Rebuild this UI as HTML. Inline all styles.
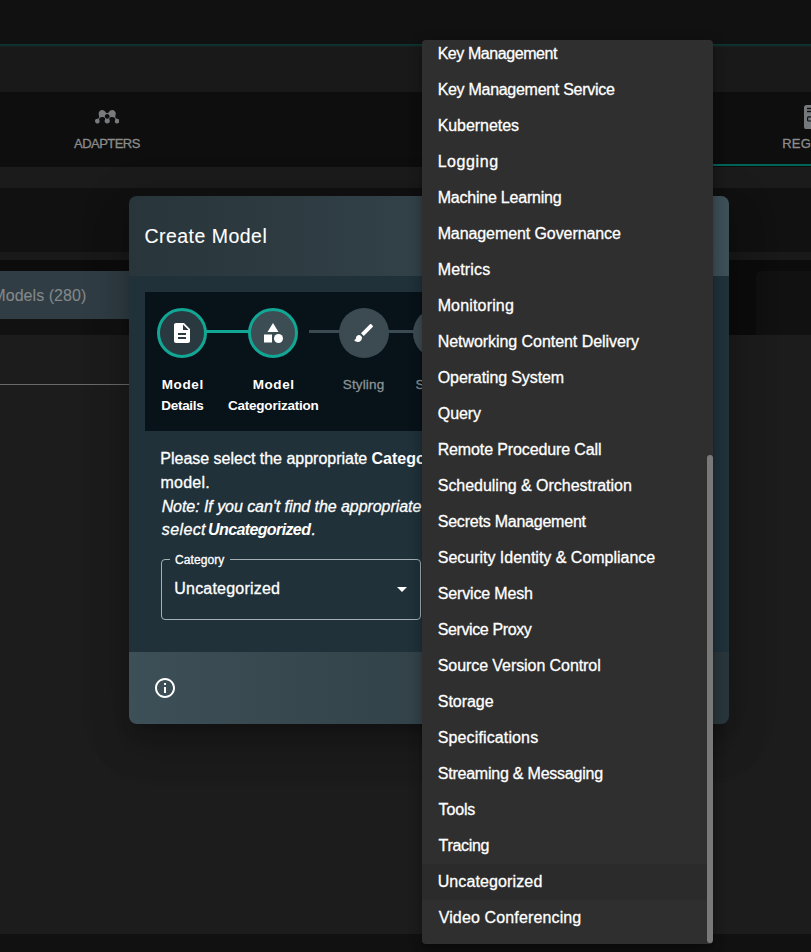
<!DOCTYPE html>
<html lang="en">
<head>
<meta charset="utf-8">
<title>Create Model</title>
<style>
*{box-sizing:border-box;margin:0;padding:0}
html,body{width:811px;height:952px;overflow:hidden;background:#1c1c1c}
body{position:relative;font-family:"Liberation Sans",sans-serif;color:#fff}
.abs{position:absolute}
.t{position:absolute;white-space:nowrap;line-height:1;-webkit-text-stroke:0.3px currentColor}
#top{left:0;top:0;width:811px;height:44px;background:#111111}
#topline{left:0;top:44px;width:811px;height:3px;background:linear-gradient(#0d3833 0%,#0f332f 34%,#142726 67%,#191919 100%)}
#band1{left:0;top:47px;width:811px;height:45px;background:#191919}
#tabs{left:0;top:92px;width:811px;height:75px;background:#0e0e0e}
#tabind{left:700px;top:164px;width:111px;height:2px;background:#006459}
#band2{left:0;top:167px;width:811px;height:21px;background:#1b1b1b}
#area{left:0;top:188px;width:811px;height:147px;background:#111}
#band3{left:0;top:252px;width:811px;height:8px;background:#191919}
#area2{left:0;top:260px;width:811px;height:75px;background:#0c0c0c}
#area3{left:0;top:319px;width:140px;height:16px;background:#111}
#modelsbtn{left:0;top:271px;width:200px;height:48px;background:#303d44}
#rbox{left:756px;top:271px;width:70px;height:64px;background:#111;border-radius:6px 0 0 0}
#hline{left:0;top:384px;width:129px;height:1px;background:#6a6a6a}
#bottom{left:0;top:934px;width:811px;height:18px;background:#111}
#modal{left:129px;top:196px;width:600px;height:528px;border-radius:8px;box-shadow:0 11px 15px -7px rgba(0,0,0,.2),0 24px 38px 3px rgba(0,0,0,.14),0 9px 46px 8px rgba(0,0,0,.12)}
#mclip{left:0;top:0;width:600px;height:528px;border-radius:8px;overflow:hidden}
#mhead{left:0;top:0;width:600px;height:80px;background:linear-gradient(90deg,#28353a 0%,#3d4f57 100%)}
#mbody{left:0;top:80px;width:600px;height:376px;background:#20313a}
#mfoot{left:0;top:456px;width:600px;height:72px;background:linear-gradient(90deg,#3d4f57 0%,#28353a 100%)}
#stepper{left:16px;top:96px;width:568px;height:139px;background:#071318}
.circ{position:absolute;width:50px;height:50px;border-radius:50%;top:16px}
.circ svg{position:absolute;left:13px;top:13px;width:24px;height:24px;fill:#fff}
.done{background:#2a393f;border:3px solid #12a695}
.done svg,.act svg{left:10px;top:10px}
.act{background:#3d4d54;border:3px solid #12a695}
.todo{background:#3c4b52}
.conn{position:absolute;height:3px;top:38px}
#select{left:32px;top:363px;width:260px;height:61px;border:1px solid #a4b0b6;border-radius:4px}
#notch{left:41px;top:361px;width:60px;height:4px;background:#20313a}
#menu{left:422px;top:40px;width:291px;height:904px;background:#2f2f2f;border-radius:4px;overflow:hidden}
#menushadow{left:422px;top:40px;width:291px;height:904px;border-radius:4px;box-shadow:0 5px 5px -3px rgba(0,0,0,.2),0 8px 10px 1px rgba(0,0,0,.14),0 3px 14px 2px rgba(0,0,0,.12)}
.sel{background:#2b2b2b}
#thumb{left:285px;top:415px;width:6px;height:488px;background:#797979;border-radius:3px}
</style>
</head>
<body>
<div class="abs" id="top"></div>
<div class="abs" id="topline"></div>
<div class="abs" id="band1"></div>
<div class="abs" id="tabs"></div>
<div class="abs" id="tabind"></div>
<div class="abs" id="band2"></div>
<div class="abs" id="area"></div>
<div class="abs" id="band3"></div>
<div class="abs" id="area2"></div>
<div class="abs" id="area3"></div>
<div class="abs" id="modelsbtn"></div>
<div class="abs" id="rbox"></div>
<div class="abs" id="hline"></div>
<div class="abs" id="bottom"></div>

<svg class="abs" style="left:94.7px;top:107px" width="24.4" height="19.52" viewBox="0 0 640 512"><path fill="#777b7d" d="M624.6 325.2c-12.3-12.4-29.7-19.2-48.4-17.2-43.3-1-49.7-34.9-37.5-98.8 22.8-57.5-14.9-131.5-87.4-130.8-77.4.7-81.7 82-130.9 82-48.1 0-54-81.3-130.9-82-72.9-.8-110.1 73.3-87.4 130.8 12.2 63.9 5.8 97.8-37.5 98.8-21.2-2.3-37 6.5-53 22.5-19.9 19.7-19.3 94.8 42.6 102.6 47.1 5.9 81.6-42.9 61.2-87.8-47.3-103.7 185.9-106.1 146.5-8.2-.1.1-.2.2-.3.4-26.8 42.8 6.8 97.4 58.8 95.2 52.1 2.1 85.4-52.6 58.8-95.2-.1-.2-.2-.3-.3-.4-39.4-97.9 193.800-95.5 146.5 8.2-4.6 10-6.7 21.3-5.7 33 4.9 53.4 68.7 74.1 104.9 35.2 17.8-14.8 23.1-65.6 0-88.3zm-303.9-19.1h-.6c-43.4 0-62.8-37.5-62.8-62.8 0-34.700 28.2-62.8 62.8-62.8h.6c34.700 0 62.8 28.100 62.8 62.8 0 25-19.2 62.8-62.8 62.8z"/></svg>
<svg class="abs" style="left:804px;top:105px" width="24" height="24" viewBox="0 0 24 24"><rect x="0" y="0" width="24" height="24" rx="2.6" fill="#75797c"/><rect x="3" y="2.8" width="18" height="1.4" fill="#0e0e0e"/><rect x="3" y="5.8" width="18" height="1.4" fill="#0e0e0e"/><rect x="3.6" y="11.8" width="16" height="4.2" rx="1" fill="none" stroke="#0e0e0e" stroke-width="1.2"/></svg>
<div class="t" style="left:74.07px;top:136.88px;font-size:13px;letter-spacing:-0.543px;color:#8c8c8c">ADAPTERS</div>
<div class="t" style="left:782.24px;top:136.88px;font-size:13px;letter-spacing:0.175px;color:#8c8c8c">REGISTRY</div>
<div class="t" style="left:-7.66px;top:287.62px;font-size:16px;letter-spacing:0.048px;color:#84888a;-webkit-text-stroke:0.1px currentColor">Models (280)</div>

<div class="abs" id="modal">
 <div class="abs" id="mclip">
  <div class="abs" id="mhead"></div>
  <div class="abs" id="mbody"></div>
  <div class="abs" id="mfoot"></div>
  <div class="abs" id="stepper">
    <div class="conn" style="left:60px;width:46px;background:#12a695"></div>
    <div class="conn" style="left:164px;width:32px;background:#3c4b52"></div>
    <div class="conn" style="left:242px;width:30px;background:#3c4b52"></div>
    <div class="circ done" style="left:12px"><svg viewBox="0 0 24 24"><path d="M14 2H6c-1.1 0-1.99.9-1.99 2L4 20c0 1.1.89 2 1.99 2H18c1.1 0 2-.9 2-2V8l-6-6zm2 16H8v-2h8v2zm0-4H8v-2h8v2zm-3-5V3.5L18.500 9H13z"/></svg></div>
    <div class="circ act" style="left:103px"><svg viewBox="0 0 24 24"><path d="m12 2-5.500 9h11z"/><circle cx="17.5" cy="17.5" r="4.5"/><path d="M3 13.500h8v8H3z"/></svg></div>
    <div class="circ todo" style="left:194px"><svg viewBox="0 0 24 24"><path d="M7 14c-1.660 0-3 1.340-3 3 0 1.310-1.160 2-2 2 .92 1.220 2.490 2 4 2 2.210 0 4-1.790 4-4 0-1.660-1.340-3-3-3zm13.710-9.370-1.340-1.340a.996.996 0 0 0-1.410 0L9 12.250 11.750 15l8.960-8.960c.39-.39.39-1.020 0-1.410z"/></svg></div>
    <div class="circ todo" style="left:268px"></div>
  </div>
  <div class="abs" id="select"></div>
  <div class="abs" id="notch"></div>
  <svg class="abs" style="left:261.4px;top:380.9px" width="24" height="24" viewBox="0 0 24 24"><path d="M7 10l5 5 5-5z" fill="#fff"/></svg>
  <svg class="abs" style="left:24px;top:480px" width="24" height="24" viewBox="0 0 24 24"><path fill="#fff" d="M11 7h2v2h-2zm0 4h2v6h-2zm1-9C6.480 2 2 6.480 2 12s4.480 10 10 10 10-4.480 10-10S17.520 2 12 2zm0 18c-4.410 0-8-3.590-8-8s3.590-8 8-8 8 3.590 8 8-3.590 8-8 8z"/></svg>
<div class="t" style="left:15.45px;top:30.70px;font-size:19.5px;letter-spacing:0.474px;color:#fff;-webkit-text-stroke:0.1px currentColor">Create Model</div>
<div class="t" style="left:32.77px;top:181.92px;font-size:13.5px;letter-spacing:0.612px;color:#fff;font-weight:bold;-webkit-text-stroke:0">Model</div>
<div class="t" style="left:32.37px;top:202.82px;font-size:13.5px;letter-spacing:-0.323px;color:#fff;font-weight:bold;-webkit-text-stroke:0">Details</div>
<div class="t" style="left:123.67px;top:181.72px;font-size:13.5px;letter-spacing:0.587px;color:#fff;font-weight:bold;-webkit-text-stroke:0">Model</div>
<div class="t" style="left:99.03px;top:202.82px;font-size:13.5px;letter-spacing:-0.230px;color:#fff;font-weight:bold;-webkit-text-stroke:0">Categorization</div>
<div class="t" style="left:213.74px;top:182.09px;font-size:13.5px;letter-spacing:0.150px;color:#8a9296">Styling</div>
<div class="t" style="left:286.44px;top:182.09px;font-size:13.5px;letter-spacing:0.414px;color:#8a9296">Source</div>
<div class="t" style="left:31.34px;top:254.82px;font-size:16px;letter-spacing:-0.012px;color:#fff">Please select the appropriate</div>
<div class="t" style="left:242.58px;top:254.80px;font-size:16px;letter-spacing:-0.025px;color:#fff;font-weight:bold;-webkit-text-stroke:0">Category</div>
<div class="t" style="left:314.98px;top:254.82px;font-size:16px;letter-spacing:0.829px;color:#fff">and</div>
<div class="t" style="left:345.99px;top:254.80px;font-size:16px;letter-spacing:0.014px;color:#fff;font-weight:bold;-webkit-text-stroke:0">Subcategory</div>
<div class="t" style="left:446.42px;top:254.82px;font-size:16px;letter-spacing:0.042px;color:#fff">relevant to your</div>
<div class="t" style="left:31.42px;top:279.32px;font-size:16px;letter-spacing:0.252px;color:#fff">model.</div>
<div class="t" style="left:32.63px;top:303.03px;font-size:16px;letter-spacing:-0.057px;color:#fff;font-style:italic">Note: If you can't find the appropriate</div>
<div class="t" style="left:294.73px;top:303.03px;font-size:16px;letter-spacing:-0.322px;color:#fff;font-style:italic">category or subcategory, please</div>
<div class="t" style="left:32.86px;top:326.33px;font-size:16px;letter-spacing:0.369px;color:#fff;font-style:italic">select</div>
<div class="t" style="left:79.06px;top:326.30px;font-size:16px;letter-spacing:-0.614px;color:#fff;font-weight:bold;-webkit-text-stroke:0;font-style:italic">Uncategorized</div>
<div class="t" style="left:182.58px;top:326.33px;font-size:16px;letter-spacing:0.000px;color:#fff;font-style:italic">.</div>
<div class="t" style="left:46.01px;top:357.98px;font-size:12px;letter-spacing:0.094px;color:#fff">Category</div>
<div class="t" style="left:45.27px;top:385.22px;font-size:16px;letter-spacing:0.204px;color:#fff">Uncategorized</div>
 </div>
</div>

<div class="abs" id="menushadow"></div>
<div class="abs" id="menu">
<div class="t" style="left:15.64px;top:6.02px;font-size:16px;letter-spacing:-0.427px;color:#fff">Key Management</div>
<div class="t" style="left:15.64px;top:42.02px;font-size:16px;letter-spacing:-0.287px;color:#fff">Key Management Service</div>
<div class="t" style="left:15.64px;top:78.02px;font-size:16px;letter-spacing:-0.045px;color:#fff">Kubernetes</div>
<div class="t" style="left:15.64px;top:114.02px;font-size:16px;letter-spacing:0.587px;color:#fff">Logging</div>
<div class="t" style="left:15.64px;top:150.02px;font-size:16px;letter-spacing:-0.215px;color:#fff">Machine Learning</div>
<div class="t" style="left:15.64px;top:186.02px;font-size:16px;letter-spacing:-0.087px;color:#fff">Management Governance</div>
<div class="t" style="left:15.64px;top:222.02px;font-size:16px;letter-spacing:0.187px;color:#fff">Metrics</div>
<div class="t" style="left:15.64px;top:258.02px;font-size:16px;letter-spacing:0.167px;color:#fff">Monitoring</div>
<div class="t" style="left:15.64px;top:294.02px;font-size:16px;letter-spacing:-0.049px;color:#fff">Networking Content Delivery</div>
<div class="t" style="left:15.78px;top:330.02px;font-size:16px;letter-spacing:-0.116px;color:#fff">Operating System</div>
<div class="t" style="left:15.78px;top:366.02px;font-size:16px;letter-spacing:-0.076px;color:#fff">Query</div>
<div class="t" style="left:15.64px;top:402.02px;font-size:16px;letter-spacing:-0.117px;color:#fff">Remote Procedure Call</div>
<div class="t" style="left:15.76px;top:438.02px;font-size:16px;letter-spacing:-0.028px;color:#fff">Scheduling &amp; Orchestration</div>
<div class="t" style="left:15.76px;top:474.02px;font-size:16px;letter-spacing:-0.225px;color:#fff">Secrets Management</div>
<div class="t" style="left:15.76px;top:510.02px;font-size:16px;letter-spacing:-0.015px;color:#fff">Security Identity &amp; Compliance</div>
<div class="t" style="left:15.76px;top:546.02px;font-size:16px;letter-spacing:-0.163px;color:#fff">Service Mesh</div>
<div class="t" style="left:15.76px;top:582.02px;font-size:16px;letter-spacing:-0.391px;color:#fff">Service Proxy</div>
<div class="t" style="left:15.76px;top:618.02px;font-size:16px;letter-spacing:-0.075px;color:#fff">Source Version Control</div>
<div class="t" style="left:15.76px;top:654.02px;font-size:16px;letter-spacing:-0.024px;color:#fff">Storage</div>
<div class="t" style="left:15.76px;top:690.02px;font-size:16px;letter-spacing:0.129px;color:#fff">Specifications</div>
<div class="t" style="left:15.76px;top:726.02px;font-size:16px;letter-spacing:-0.225px;color:#fff">Streaming &amp; Messaging</div>
<div class="t" style="left:16.62px;top:762.02px;font-size:16px;letter-spacing:-0.150px;color:#fff">Tools</div>
<div class="t" style="left:16.62px;top:798.02px;font-size:16px;letter-spacing:-0.314px;color:#fff">Tracing</div>
<div class="abs sel" style="left:0;top:824px;width:285px;height:36px"></div>
<div class="t" style="left:15.67px;top:834.02px;font-size:16px;letter-spacing:0.121px;color:#fff">Uncategorized</div>
<div class="t" style="left:16.66px;top:870.02px;font-size:16px;letter-spacing:0.139px;color:#fff">Video Conferencing</div>
  <div class="abs" id="thumb"></div>
</div>
</body>
</html>
